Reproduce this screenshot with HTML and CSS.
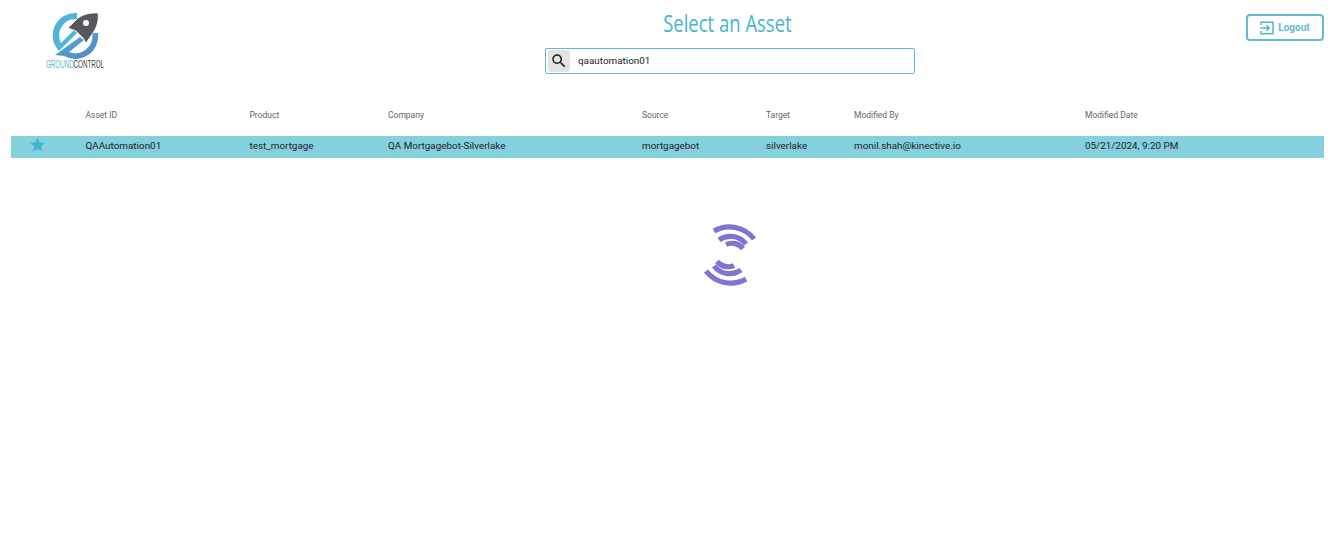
FILE: index.html
```html
<!DOCTYPE html>
<html lang="en">
<head>
<meta charset="utf-8">
<title>Select an Asset</title>
<link rel="stylesheet" href="styles.css">
</head>
<body>
<header class="top">
  <div class="logo">
    <svg class="logo-svg" width="70" height="60" viewBox="0 0 70 60">
      <defs>
        <linearGradient id="ring" x1="0" y1="0" x2="1" y2="1">
          <stop offset="0" stop-color="#45b4d6"/>
          <stop offset="1" stop-color="#5b7fc6"/>
        </linearGradient>
      </defs>
      <path d="M37 13 A22.5 22.5 0 0 0 19 51 L37 33 L34 30 L21 43 A16.5 16.5 0 0 1 37 19 Z" fill="#4fb4da"/>
      <path d="M58 33 A23 23 0 0 1 24 56 L15 55 L40 37 L44 40 L29 52 A17 17 0 0 0 52 33 Z" fill="url(#ring)"/>
      <path d="M58 13 C50 12.5 44 14 38 18 L28 28 L36 31 L43 38 L46 43 L53 33 C57 27 59 20 58 13 Z" fill="#55575c" stroke="#fff" stroke-width="0.8"/>
      <circle cx="46" cy="23" r="3" fill="#fff"/>
    </svg>
    <div class="logo-text"><span class="logo-a">GROUND</span><span class="logo-b">CONTROL</span></div>
  </div>
  <div class="center">
    <h1 class="title"><span class="title-in">Select an Asset</span></h1>
    <div class="search">
      <span class="search-btn">
        <svg width="18" height="18" viewBox="0 0 24 24"><path fill="#1a1a1a" d="M15.5 14h-.79l-.28-.27A6.471 6.471 0 0 0 16 9.5 6.5 6.5 0 1 0 9.5 16c1.61 0 3.09-.59 4.23-1.57l.27.28v.79l5 4.99L20.49 19l-4.99-5zm-6 0C7.01 14 5 11.99 5 9.5S7.01 5 9.5 5 14 7.01 14 9.5 11.99 14 9.5 14z"/></svg>
      </span>
      <span class="search-text">qaautomation01</span>
    </div>
  </div>
  <button class="logout">
    <svg width="14" height="14" viewBox="0 0 14 14" fill="none" stroke="#4db6cf" stroke-width="1.5"><path d="M1 4V1.2H13V12.8H1V10"/><path d="M0.5 7H9M6.5 4.2 9.3 7 6.5 9.8"/></svg>
    <span>Logout</span>
  </button>
</header>
<main class="table">
  <div class="row head">
    <div></div><div>Asset ID</div><div>Product</div><div>Company</div><div>Source</div><div>Target</div><div>Modified By</div><div>Modified Date</div>
  </div>
  <div class="row data">
    <div class="star-cell"><svg width="15" height="15" viewBox="0 0 24 24"><path fill="#3fb4cf" d="M12 1l3.4 7.6 8.2.9-6.1 5.6 1.7 8.1L12 19.1 4.8 23.2l1.7-8.1L.4 9.5l8.2-.9z"/></svg></div>
    <div>QAAutomation01</div><div>test_mortgage</div><div>QA Mortgagebot-Silverlake</div><div>mortgagebot</div><div>silverlake</div><div>monil.shah@kinective.io</div><div>05/21/2024, 9:20 PM</div>
  </div>
  <div class="spinner">
    <svg width="80" height="80" viewBox="0 0 80 80" fill="none" stroke="#7f74d6" stroke-width="5.2">
      <path d="M24 16 A31 31 0 0 1 64 24"/>
      <path d="M29 25 A19.6 19.6 0 0 1 56 29"/>
      <path d="M36 29.5 A14.4 14.4 0 0 1 53 33.5"/>
      <g transform="rotate(180 40 40)">
        <path d="M24 16 A31 31 0 0 1 64 24"/>
        <path d="M29 25 A19.6 19.6 0 0 1 56 29"/>
        <path d="M36 29.5 A14.4 14.4 0 0 1 53 33.5"/>
      </g>
    </svg>
  </div>
</main>
</body>
</html>
```
FILE: styles.css
```css
* { box-sizing: border-box; }
html, body { margin: 0; height: 100%; }
body { background: #fff; font-family: Roboto, "Liberation Sans", sans-serif; color: #1c1c1c; overflow: hidden; }
.top { display: grid; grid-template-columns: 534px 370px 1fr; padding: 0 20px 0 11px; height: 100px; }
.logo { padding-left: 29px; }
.logo-svg { display: block; }
.logo-text { margin-left: 6px; width: max-content; font-family: "Liberation Sans", sans-serif; font-size: 11px; line-height: 9px; white-space: nowrap; transform: scaleX(.565); transform-origin: left center; }
.logo-a { color: #5cb8d2; }
.logo-b { color: #3c3f44; }
.center { display: flex; flex-direction: column; align-items: center; }
.title { margin: 9px 6px 0 0; height: 39px; font-weight: 400; font-size: 24px; line-height: 28px; color: #45b5cf; display: flex; justify-content: center; }
.title-in { display: inline-block; font-family: "Open Sans", sans-serif; transform: scaleX(.77); white-space: nowrap; }
.search { width: 370px; height: 26px; border: 1px solid #58bdd3; border-radius: 2px; display: flex; align-items: center; padding-left: 2px; }
.search-btn { width: 22px; height: 22px; background: #e3e3e3; border-radius: 3px; display: flex; align-items: center; justify-content: center; }
.search-text { margin-left: 8px; padding-bottom: 1px; font-size: 9.9px; }
.logout { justify-self: end; margin-top: 14px; width: 78px; height: 27px; background: #fff; border: 2px solid #5fbcd4; border-radius: 4px; color: #5cbcd3; font: 700 10px Roboto, sans-serif; display: flex; align-items: center; justify-content: center; gap: 4px; padding: 0; }
.table { padding: 0 20px 0 11px; }
.row { display: grid; grid-template-columns: 74.5px 164px 138.5px 254px 124px 88px 231px 1fr; align-items: center; }
.head { height: 30px; font-size: 8.5px; color: #666; }
.data { height: 22px; margin-top: 5.5px; padding-bottom: 2px; background: #85d0df; font-size: 9.9px; color: #1c1c1c; }
.star-cell { display: flex; padding: 0 0 3px 18.5px; }
.spinner { margin: 57.5px 0 0 679px; }
.spinner svg { display: block; }
```
